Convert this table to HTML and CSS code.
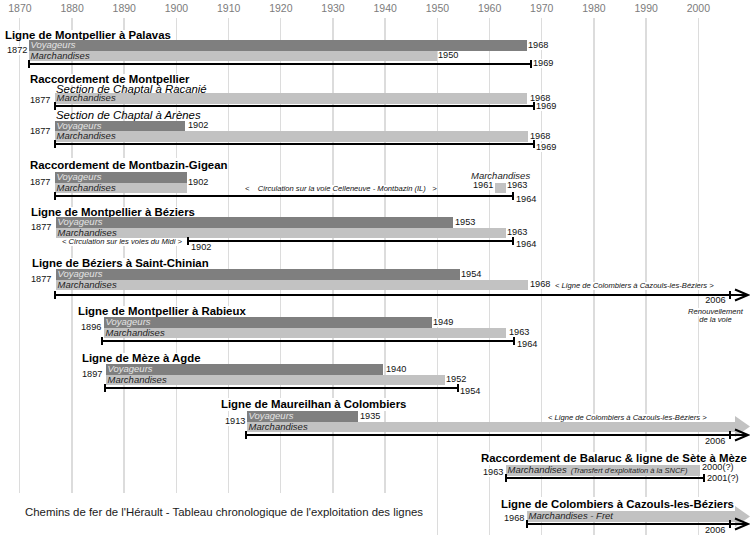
FILE: index.html
```html
<!DOCTYPE html>
<html lang="fr">
<head>
<meta charset="utf-8">
<title>Chemins de fer de l'Hérault - Tableau chronologique</title>
<link rel="stylesheet" href="styles.css">
</head>
<body>
<div class="chart">
  <div class="axis">
    <span class="yr">1870</span><span class="yr">1880</span><span class="yr">1890</span><span class="yr">1900</span><span class="yr">1910</span><span class="yr">1920</span><span class="yr">1930</span><span class="yr">1940</span><span class="yr">1950</span><span class="yr">1960</span><span class="yr">1970</span><span class="yr">1980</span><span class="yr">1990</span><span class="yr">2000</span>
  </div>

  <section class="sec s1">
    <h2 class="title g1" style="margin-left:5px">Ligne de Montpellier à Palavas</h2>
    <span class="yl gs" style="margin-left:7px">1872</span>
    <div class="bar dark g2" style="margin-left:29px;width:498px">Voyageurs</div>
    <span class="yl g2" style="margin-left:528px">1968</span>
    <div class="bar light g3" style="margin-left:29px;width:408px">Marchandises</div>
    <span class="yl g3" style="margin-left:438px">1950</span>
    <div class="rule g4" style="margin-left:28px"><span class="ln" style="width:504px"></span></div>
    <span class="yl mid g4" style="margin-left:533px">1969</span>
  </section>

  <section class="sec s2">
    <h2 class="title g1" style="margin-left:30px">Raccordement de Montpellier</h2>
    <h3 class="sub g2" style="margin-left:56px">Section de Chaptal à Racanié</h3>
    <span class="yl drop g3" style="margin-left:30px">1877</span>
    <div class="bar light g3" style="margin-left:55px;width:472px">Marchandises</div>
    <span class="yl g3" style="margin-left:530px">1968</span>
    <div class="rule g4" style="margin-left:54px"><span class="ln" style="width:481px"></span></div>
    <span class="yl mid g4" style="margin-left:536px">1969</span>
    <h3 class="sub g5" style="margin-left:56px">Section de Chaptal à Arènes</h3>
    <span class="yl gs6" style="margin-left:30px">1877</span>
    <div class="bar dark g6" style="margin-left:55px;width:130px">Voyageurs</div>
    <span class="yl g6" style="margin-left:188px">1902</span>
    <div class="bar light g7" style="margin-left:55px;width:473px">Marchandises</div>
    <span class="yl g7" style="margin-left:530px">1968</span>
    <div class="rule g8" style="margin-left:54px"><span class="ln" style="width:481px"></span></div>
    <span class="yl below g8" style="margin-left:536px">1969</span>
  </section>

  <section class="sec s3">
    <h2 class="title g1" style="margin-left:30px">Raccordement de Montbazin-Gigean</h2>
    <span class="yl gs" style="margin-left:30px">1877</span>
    <div class="bar dark g2" style="margin-left:55px;width:132px">Voyageurs</div>
    <div class="bar light g3" style="margin-left:55px;width:132px">Marchandises</div>
    <span class="yl gs" style="margin-left:188px">1902</span>
    <span class="note g3" style="margin-left:245px">&lt;&nbsp;&nbsp;&nbsp;&nbsp;Circulation sur la voie Celleneuve - Montbazin (IL)&nbsp;&nbsp;&nbsp;&gt;</span>
    <span class="lab g2" style="margin-left:471px">Marchandises</span>
    <span class="yl top g3" style="margin-left:473px">1961</span>
    <div class="bar light g3" style="margin-left:495px;width:11px"></div>
    <span class="yl top g3" style="margin-left:507px">1963</span>
    <div class="rule g4" style="margin-left:54px"><span class="ln" style="width:460px"></span></div>
    <span class="yl below g4" style="margin-left:516px">1964</span>
  </section>

  <section class="sec s4">
    <h2 class="title g1" style="margin-left:31px">Ligne de Montpellier à Béziers</h2>
    <span class="yl gs" style="margin-left:31px">1877</span>
    <div class="bar dark g2" style="margin-left:56px;width:397px">Voyageurs</div>
    <span class="yl g2" style="margin-left:455px">1953</span>
    <div class="bar light g3" style="margin-left:56px;width:450px">Marchandises</div>
    <span class="yl g3" style="margin-left:507px">1963</span>
    <span class="note rs g4" style="margin-left:62px">&lt; Circulation sur les voies du Midi &gt;</span>
    <div class="rule g4" style="margin-left:187px"><span class="ln" style="width:327px"></span></div>
    <span class="yl under g4" style="margin-left:191px">1902</span>
    <span class="yl below g4" style="margin-left:516px">1964</span>
  </section>

  <section class="sec s5">
    <h2 class="title g1" style="margin-left:32px">Ligne de Béziers à Saint-Chinian</h2>
    <span class="yl gs" style="margin-left:31px">1877</span>
    <div class="bar dark g2" style="margin-left:56px;width:404px">Voyageurs</div>
    <span class="yl g2" style="margin-left:461px">1954</span>
    <div class="bar light g3" style="margin-left:56px;width:472px">Marchandises</div>
    <span class="yl g3" style="margin-left:530px">1968</span>
    <span class="note g3" style="margin-left:555px">&lt; Ligne de Colombiers à Cazouls-les-Béziers &gt;</span>
    <div class="rule lo g4" style="margin-left:54px"><span class="ln" style="width:677px"></span><svg class="arw" viewBox="0 0 19 14"><path d="M0 7H16M4 1.5L17 7L4 12.5" fill="none" stroke="#000" stroke-width="2"/></svg></div>
    <div class="anno g4" style="margin-left:688px"><span class="yl">2006</span><span class="nt">Renouvellement</span><span class="nt">de la voie</span></div>
  </section>

  <section class="sec s6">
    <h2 class="title g1" style="margin-left:78px">Ligne de Montpellier à Rabieux</h2>
    <span class="yl gs" style="margin-left:81px">1896</span>
    <div class="bar dark g2" style="margin-left:104px;width:328px">Voyageurs</div>
    <span class="yl g2" style="margin-left:433px">1949</span>
    <div class="bar light g3" style="margin-left:104px;width:402px">Marchandises</div>
    <span class="yl g3" style="margin-left:509px">1963</span>
    <div class="rule g4" style="margin-left:101px"><span class="ln" style="width:414px"></span></div>
    <span class="yl below g4" style="margin-left:517px">1964</span>
  </section>

  <section class="sec s7">
    <h2 class="title g1" style="margin-left:82px">Ligne de Mèze à Agde</h2>
    <span class="yl gs" style="margin-left:82px">1897</span>
    <div class="bar dark g2" style="margin-left:106px;width:277px">Voyageurs</div>
    <span class="yl g2" style="margin-left:386px">1940</span>
    <div class="bar light g3" style="margin-left:106px;width:339px">Marchandises</div>
    <span class="yl g3" style="margin-left:446px">1952</span>
    <div class="rule g4" style="margin-left:104px"><span class="ln" style="width:355px"></span></div>
    <span class="yl below g4" style="margin-left:460px">1954</span>
  </section>

  <section class="sec s8">
    <h2 class="title g1" style="margin-left:221px">Ligne de Maureilhan à Colombiers</h2>
    <span class="yl gs" style="margin-left:225px">1913</span>
    <div class="bar dark g2" style="margin-left:247px;width:111px">Voyageurs</div>
    <span class="yl g2" style="margin-left:360px">1935</span>
    <span class="note g2" style="margin-left:548px">&lt; Ligne de Colombiers à Cazouls-les-Béziers &gt;</span>
    <div class="bar light g3" style="margin-left:247px;width:488px">Marchandises</div>
    <svg class="head g3" style="margin-left:735px" viewBox="0 0 15 21"><path d="M0 0L15 10.5L0 21Z" fill="#c2c2c2"/></svg>
    <div class="rule g4" style="margin-left:245px"><span class="ln" style="width:486px"></span><svg class="arw" viewBox="0 0 19 14"><path d="M0 7H16M4 1.5L17 7L4 12.5" fill="none" stroke="#000" stroke-width="2"/></svg></div>
    <span class="yl under g4" style="margin-left:705px">2006</span>
  </section>

  <section class="sec s9">
    <h2 class="title g1" style="margin-left:481px">Raccordement de Balaruc &amp; ligne de Sète à Mèze</h2>
    <span class="yl drop g2" style="margin-left:483px">1963</span>
    <div class="bar light g2" style="margin-left:506px;width:194px">Marchandises<small class="sm">(Transfert d'exploitation à la SNCF)</small></div>
    <span class="yl top g2" style="margin-left:702px">2000(?)</span>
    <div class="rule g3" style="margin-left:505px"><span class="ln" style="width:200px"></span></div>
    <span class="yl mid g3" style="margin-left:707px">2001(?)</span>
  </section>

  <div class="last">
    <p class="caption">Chemins de fer de l'Hérault - Tableau chronologique de l'exploitation des lignes</p>
    <section class="sec s10">
      <h2 class="title g1" style="margin-left:501px">Ligne de Colombiers à Cazouls-les-Béziers</h2>
      <span class="yl drop g2" style="margin-left:504px">1968</span>
      <div class="bar light g2" style="margin-left:527px;width:208px">Marchandises - Fret</div>
      <svg class="head g2" style="margin-left:735px" viewBox="0 0 15 21"><path d="M0 0L15 10.5L0 21Z" fill="#c2c2c2"/></svg>
      <div class="rule g3" style="margin-left:526px"><span class="ln" style="width:205px"></span><svg class="arw" viewBox="0 0 19 14"><path d="M0 7H16M4 1.5L17 7L4 12.5" fill="none" stroke="#000" stroke-width="2"/></svg></div>
      <span class="yl under g3" style="margin-left:705px">2006</span>
    </section>
  </div>
</div>
</body>
</html>
```

FILE: styles.css
```css
* { box-sizing: border-box; margin: 0; padding: 0; }
html, body { background: #fff; }
body {
  width: 750px;
  height: 535px;
  overflow: hidden;
  font-family: "Liberation Sans", Arial, Helvetica, sans-serif;
  color: #000;
}

.chart {
  width: 750px;
  height: 535px;
  background-image: repeating-linear-gradient(90deg, #dcdcdc 0, #dcdcdc 1.4px, transparent 1.4px, transparent 52.2px);
  background-size: 731px 517px;
  background-position: 19.2px 18px;
  background-repeat: no-repeat;
}

.axis { display: flex; height: 30px; margin-left: -6.2px; }
.yr {
  flex: 0 0 52.2px;
  text-align: center;
  font-size: 10.5px;
  line-height: 17px;
  color: #7c7c7c;
}

/* a section of the chart: title row, two bar rows, one rule row */
.sec {
  display: grid;
  grid-template-columns: 100%;
  grid-template-rows: var(--th) 10.5px 10.5px 8px;
  align-content: start;
}
.sec > * { grid-column: 1; justify-self: start; white-space: nowrap; }

.g1 { grid-row: 1; }
.g2 { grid-row: 2; }
.g3 { grid-row: 3; }
.g4 { grid-row: 4; }
.g5 { grid-row: 5; }
.g6 { grid-row: 6; }
.g7 { grid-row: 7; }
.g8 { grid-row: 8; }
.gs { grid-row: 2 / 4; }
.gs6 { grid-row: 6 / 8; }

.s1 { height: 44px; --th: 10px; }
.s2 { height: 84px; --th: 11px; grid-template-rows: 11px 8px 10.5px 7px 10px 10.5px 10.5px 8px; }
.s3 { height: 49px; --th: 14px; }
.s4 { height: 51px; --th: 10px; }
.s5 { height: 48px; --th: 11px; }
.s6 { height: 47px; --th: 11px; }
.s7 { height: 45px; --th: 11px; }
.s8 { height: 54px; --th: 13px; }
.s9 { height: 41px; --th: 13px; grid-template-rows: 13px 10.5px 8px; }
.s10 { margin-top: 4px; --th: 14px; grid-template-rows: 14px 10.5px 8px; align-self: start; }

.title {
  font-size: 11.4px;
  font-weight: bold;
  line-height: var(--th);
  background: #fff;
  align-self: start;
}
.sub {
  font-size: 11.4px;
  font-style: italic;
  font-weight: normal;
  line-height: 9.5px;
  align-self: start;
  z-index: 1;
}

.bar {
  height: 10.5px;
  padding-left: 1.5px;
  font-size: 9.5px;
  font-style: italic;
  line-height: 9.5px;
  align-self: start;
  overflow: hidden;
}
.dark { background: #7f7f7f; color: #e4e4e4; }
.light { background: #c2c2c2; color: #1e1e1e; }
.sm { font-size: 7.5px; margin-left: 4px; }

.yl {
  font-size: 9.2px;
  line-height: 9px;
  background: #fff;
  align-self: center;
  color: #111;
}
.yl.top { align-self: start; margin-top: -2px; }
.yl.drop { align-self: end; margin-bottom: -1.5px; }
.yl.mid { align-self: start; margin-top: -1.75px; }
.yl.below { align-self: start; margin-top: 1.5px; }
.yl.under { align-self: start; margin-top: 4.5px; }

.note {
  font-size: 7.6px;
  font-style: italic;
  line-height: 8px;
  background: #fff;
  align-self: end;
  color: #111;
}
.note.rs { align-self: start; }

.lab {
  font-size: 9.5px;
  font-style: italic;
  line-height: 7px;
  align-self: start;
  background: #fff;
  color: #222;
}

.rule {
  display: flex;
  align-items: center;
  height: 8px;
  margin-top: -1.5px;
  align-self: start;
}
.rule.lo { margin-top: 1px; }
.ln {
  display: block;
  height: 8px;
  border-left: 2px solid #000;
  border-right: 2px solid #000;
  background: linear-gradient(#000, #000) center / 100% 2px no-repeat;
}
.arw { flex: none; width: 19px; height: 14px; margin: -3px 0; overflow: visible; }
.head { width: 15px; height: 21px; align-self: start; margin-top: -5.25px; }

.anno {
  display: flex;
  flex-direction: column;
  align-items: center;
  align-self: start;
  margin-top: 6px;
}
.anno .yl { margin-bottom: 2.5px; }
.nt {
  font-size: 7.6px;
  font-style: italic;
  line-height: 8.5px;
  background: #fff;
  color: #111;
}

.last { display: grid; grid-template-columns: 100%; height: 42px; }
.last > * { grid-area: 1 / 1; }
.caption {
  justify-self: start;
  width: 430px;
  height: 42px;
  background: #fff;
  padding: 12px 0 0 25px;
  font-size: 11.4px;
  line-height: 14px;
  color: #1a1a1a;
}
```
